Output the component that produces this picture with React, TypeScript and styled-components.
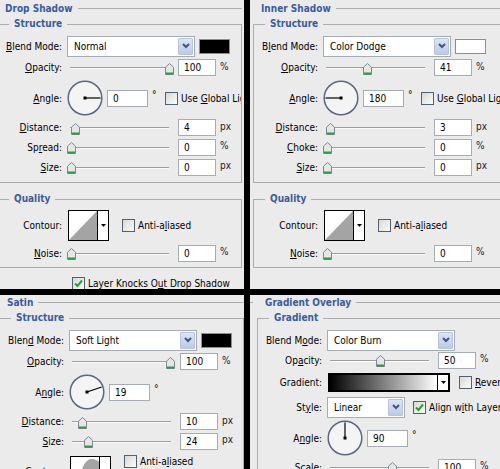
import React from 'react';
import styled, { createGlobalStyle } from 'styled-components';

const LINE = '#adadad';
const BLUE = '#3a5c9f';
const FIELD_BORDER = '#a5acb5';

const GlobalStyle = createGlobalStyle`
  html, body { margin: 0; padding: 0; background: #000; }
  body {
    font-family: 'DejaVu Sans Condensed', 'Liberation Sans', Arial, sans-serif;
    font-size: 10px;
    color: #000;
  }
  #root { width: 500px; height: 469px; overflow: hidden; }
`;

const Screen = styled.div`
  display: grid;
  grid-template-columns: 244px 250px;
  grid-template-rows: 289px 174px;
  gap: 6px;
  width: 500px;
  height: 469px;
  background: #000;
`;

const Panel = styled.section`
  background: #ebebeb;
  overflow: hidden;
`;

const Sheet = styled.div<{ $shift: number; $top: number; $w: number }>`
  margin: ${p => p.$top}px 0 0 ${p => p.$shift}px;
  width: ${p => p.$w}px;
`;

const TitleRow = styled.div`
  display: flex;
  align-items: center;
  height: 16px;
  margin-left: -14px;
  color: ${BLUE};
  font-weight: bold;
  white-space: nowrap;

  &::before {
    content: '';
    width: 10px;
    height: 1px;
    background: ${LINE};
    margin-right: 12px;
  }

  &::after {
    content: '';
    flex: 1;
    height: 1px;
    background: ${LINE};
    margin-left: 5px;
  }
`;

const Group = styled.fieldset<{ $mt: number; $pt: number; $pb: number }>`
  margin: ${p => p.$mt}px 0 0;
  padding: ${p => p.$pt}px 0 ${p => p.$pb}px;
  border: 1px solid ${LINE};
  min-width: 0;
  overflow: hidden;
`;

const Legend = styled.legend`
  margin-left: 11px;
  padding: 0 5px;
  color: ${BLUE};
  font-weight: bold;
  line-height: 14px;
`;

const Row = styled.div<{ $h: number }>`
  display: flex;
  align-items: center;
  height: ${p => p.$h}px;
  white-space: nowrap;
`;

const Label = styled.span`
  flex: none;
  width: 64px;
  text-align: right;
`;

const Controls = styled.div`
  display: flex;
  align-items: center;
  margin-left: 5px;
  height: 100%;
`;

const SelectBox = styled.div<{ $w: number }>`
  flex: none;
  display: flex;
  align-items: stretch;
  width: ${p => p.$w}px;
  height: 21px;
  box-sizing: border-box;
  padding: 1px;
  border: 1px solid ${FIELD_BORDER};
  background: #fff;
`;

const SelectText = styled.span`
  flex: 1;
  display: flex;
  align-items: center;
  padding-left: 5px;
`;

const DropButton = styled.span`
  width: 15px;
  box-sizing: border-box;
  border: 1px solid #b7c4de;
  border-radius: 1px;
  background: linear-gradient(#dbe4f5, #bccbea);
  display: flex;
  align-items: center;
  justify-content: center;
`;

const Swatch = styled.div<{ $color: string }>`
  flex: none;
  width: 31px;
  height: 15px;
  margin-left: 4px;
  box-sizing: border-box;
  border: 1px solid #8e8e8e;
  background: ${p => p.$color};
`;

const SliderWrap = styled.div`
  position: relative;
  flex: none;
  display: flex;
  align-items: center;
  width: 106px;
  height: 14px;
  box-sizing: border-box;
  padding: 0 4px 0 3px;
`;

const Track = styled.div`
  flex: 1;
  height: 1px;
  background: #9e9e9e;
  box-shadow: 0 1px 0 #fbfbfb;
`;

const ThumbSvg = styled.svg`
  position: absolute;
  top: 2px;
`;

const NumField = styled.div<{ $w?: number; $ml?: number }>`
  flex: none;
  display: flex;
  align-items: center;
  width: ${p => p.$w ?? 38}px;
  height: 17px;
  margin-left: ${p => p.$ml ?? 5}px;
  box-sizing: border-box;
  padding-left: 5px;
  border: 1px solid ${FIELD_BORDER};
  background: #fff;
`;

const Unit = styled.span`
  margin: 0 0 3px 4px;
  color: #222;
`;

const Degree = styled.span`
  flex: none;
  width: 13px;
  padding-left: 4px;
  margin-bottom: 7px;
`;

const CheckBox = styled.span<{ $ml?: number }>`
  flex: none;
  display: flex;
  align-items: center;
  justify-content: center;
  width: 13px;
  height: 13px;
  margin-left: ${p => p.$ml ?? 0}px;
  box-sizing: border-box;
  border: 1px solid #4f5f75;
  background: linear-gradient(135deg, #d8d9d2, #fbfbfa);
`;

const CheckText = styled.span`
  margin-left: 3px;
  white-space: nowrap;
`;

const KnockRow = styled.div`
  display: flex;
  align-items: center;
  height: 14px;
  margin-top: 8px;
  padding-left: 75px;
`;

const ContourBox = styled.div`
  flex: none;
  display: flex;
  width: 41px;
  height: 31px;
  margin-left: 1px;
  box-sizing: border-box;
  border: 1px solid #000;
  background: #fff;
`;

const ContourArrow = styled.div`
  flex: 1;
  border-left: 1px solid #000;
  display: flex;
  align-items: center;
  justify-content: center;
`;

const CheckGroup = styled.div<{ $ml: number; $top?: boolean }>`
  display: flex;
  align-items: center;
  margin-left: ${p => p.$ml}px;
  align-self: ${p => (p.$top ? 'flex-start' : 'center')};
  margin-top: ${p => (p.$top ? 4 : 0)}px;
`;

const GradientBar = styled.div`
  flex: none;
  display: flex;
  width: 122px;
  height: 19px;
  margin-left: 1px;
  box-sizing: border-box;
  border: 2px solid #000;
  background: #fff;
`;

const GradientFill = styled.div`
  flex: 1;
  background: linear-gradient(to right, #000, #fff);
  border-right: 1px solid #000;
`;

const GradientArrow = styled.div`
  width: 10px;
  display: flex;
  align-items: center;
  justify-content: center;
`;

const Chevron = () => (
  <svg width="8" height="6" viewBox="0 0 8 6">
    <polyline points="1,1 4,4 7,1" fill="none" stroke="#41557a" strokeWidth="2" />
  </svg>
);

const SmallArrow = () => (
  <svg width="5" height="3" viewBox="0 0 5 3">
    <polygon points="0,0 5,0 2.5,3" fill="#000" />
  </svg>
);

const Tick = () => (
  <svg width="9" height="9" viewBox="0 0 9 9">
    <polyline points="1,4.5 3.5,7 8,1.5" fill="none" stroke="#21a131" strokeWidth="2" />
  </svg>
);

const Select = ({ w, text }: { w: number; text: string }) => (
  <SelectBox $w={w}>
    <SelectText>{text}</SelectText>
    <DropButton>
      <Chevron />
    </DropButton>
  </SelectBox>
);

const Slider = ({ frac }: { frac: number }) => (
  <SliderWrap>
    <Track />
    <ThumbSvg style={{ left: Math.round(frac * 98) }} width="9" height="12" viewBox="0 0 9 12">
      <path d="M0.5 4.2 L4.5 0.5 L8.5 4.2 V11.5 H0.5 Z" fill="#e4e7e4" stroke="#7c8891" />
      <path d="M1 10.5 H8" stroke="#2f9b47" strokeWidth="2" />
    </ThumbSvg>
  </SliderWrap>
);

const Dial = ({ angle }: { angle: number }) => {
  const rad = (angle * Math.PI) / 180;
  const x = 18 + 15.5 * Math.cos(rad);
  const y = 18 - 15.5 * Math.sin(rad);
  return (
    <svg width="36" height="36" viewBox="0 0 36 36" style={{ flex: 'none' }}>
      <circle cx="18" cy="18" r="16.8" fill="#f4f4f4" stroke="#5b6880" strokeWidth="1.5" />
      <line x1="18" y1="18" x2={x} y2={y} stroke="#000" strokeWidth="1.2" />
      <rect x="16.5" y="16.5" width="3" height="3" fill="#000" />
    </svg>
  );
};

const Check = ({ on, ml }: { on?: boolean; ml?: number }) => (
  <CheckBox $ml={ml}>{on && <Tick />}</CheckBox>
);

type FieldProps = { h: number; label: React.ReactNode; children: React.ReactNode };

const Field = ({ h, label, children }: FieldProps) => (
  <Row $h={h}>
    <Label>{label}</Label>
    <Controls>{children}</Controls>
  </Row>
);

const SliderField = ({
  h,
  label,
  frac,
  value,
  unit,
}: {
  h: number;
  label: React.ReactNode;
  frac: number;
  value: string;
  unit: string;
}) => (
  <Field h={h} label={label}>
    <Slider frac={frac} />
    <NumField>{value}</NumField>
    <Unit>{unit}</Unit>
  </Field>
);

const AngleField = ({
  h,
  label,
  angle,
  global,
}: {
  h: number;
  label: React.ReactNode;
  angle: number;
  global?: React.ReactNode;
}) => (
  <Field h={h} label={label}>
    <Dial angle={angle} />
    <NumField $w={41} $ml={4}>
      {angle}
    </NumField>
    <Degree>°</Degree>
    {global && (
      <>
        <Check />
        <CheckText>{global}</CheckText>
      </>
    )}
  </Field>
);

const LinearContour = () => (
  <svg width="28" height="29" viewBox="0 0 28 29">
    <polygon points="0,29 28,0 28,29" fill="#a4a4a4" />
  </svg>
);

const SatinContour = () => (
  <svg width="28" height="29" viewBox="0 0 28 29">
    <path d="M8 29 C9 14 13 3 20 2 C24 2 28 4 28 5 V29 Z" fill="#a4a4a4" />
  </svg>
);

const ContourField = ({ h, satin }: { h: number; satin?: boolean }) => (
  <Field h={h} label="Contour:">
    <ContourBox>
      {satin ? <SatinContour /> : <LinearContour />}
      <ContourArrow>
        <SmallArrow />
      </ContourArrow>
    </ContourBox>
    <CheckGroup $ml={13} $top={satin}>
      <Check />
      <CheckText>
        Anti-a<u>l</u>iased
      </CheckText>
    </CheckGroup>
  </Field>
);

const DropShadow = () => (
  <Panel>
    <Sheet $shift={-3} $top={0} $w={245}>
      <TitleRow>Drop Shadow</TitleRow>
      <Group $mt={1} $pt={4} $pb={5}>
        <Legend>Structure</Legend>
        <Field h={22} label={<><u>B</u>lend Mode:</>}>
          <Select w={128} text="Normal" />
          <Swatch $color="#000" />
        </Field>
        <SliderField h={21} label={<><u>O</u>pacity:</>} frac={1} value="100" unit="%" />
        <AngleField h={40} label={<><u>A</u>ngle:</>} angle={0} global={<>Use <u>G</u>lobal Light</>} />
        <SliderField h={19} label={<><u>D</u>istance:</>} frac={0.04} value="4" unit="px" />
        <SliderField h={20} label={<>Sp<u>r</u>ead:</>} frac={0} value="0" unit="%" />
        <SliderField h={20} label={<><u>S</u>ize:</>} frac={0} value="0" unit="px" />
      </Group>
      <Group $mt={9} $pt={2} $pb={4}>
        <Legend>Quality</Legend>
        <ContourField h={35} />
        <SliderField h={20} label={<><u>N</u>oise:</>} frac={0} value="0" unit="%" />
      </Group>
      <KnockRow>
        <Check on />
        <CheckText>
          Layer Knocks O<u>u</u>t Drop Shadow
        </CheckText>
      </KnockRow>
    </Sheet>
  </Panel>
);

const InnerShadow = () => (
  <Panel>
    <Sheet $shift={3} $top={0} $w={300}>
      <TitleRow>Inner Shadow</TitleRow>
      <Group $mt={1} $pt={4} $pb={5}>
        <Legend>Structure</Legend>
        <Field h={22} label={<>B<u>l</u>end Mode:</>}>
          <Select w={128} text="Color Dodge" />
          <Swatch $color="#fff" />
        </Field>
        <SliderField h={21} label={<><u>O</u>pacity:</>} frac={0.41} value="41" unit="%" />
        <AngleField h={40} label={<><u>A</u>ngle:</>} angle={180} global={<>Use <u>G</u>lobal Light</>} />
        <SliderField h={19} label={<><u>D</u>istance:</>} frac={0.03} value="3" unit="px" />
        <SliderField h={20} label={<><u>C</u>hoke:</>} frac={0} value="0" unit="%" />
        <SliderField h={20} label={<><u>S</u>ize:</>} frac={0} value="0" unit="px" />
      </Group>
      <Group $mt={9} $pt={2} $pb={4}>
        <Legend>Quality</Legend>
        <ContourField h={35} />
        <SliderField h={20} label={<><u>N</u>oise:</>} frac={0} value="0" unit="%" />
      </Group>
    </Sheet>
  </Panel>
);

const Satin = () => (
  <Panel>
    <Sheet $shift={-1} $top={-1} $w={245}>
      <TitleRow>Satin</TitleRow>
      <Group $mt={1} $pt={4} $pb={5}>
        <Legend>Structure</Legend>
        <Field h={22} label={<>Blen<u>d</u> Mode:</>}>
          <Select w={128} text="Soft Light" />
          <Swatch $color="#000" />
        </Field>
        <SliderField h={21} label={<><u>O</u>pacity:</>} frac={0.99} value="100" unit="%" />
        <AngleField h={40} label={<>A<u>n</u>gle:</>} angle={19} />
        <SliderField h={19} label={<><u>D</u>istance:</>} frac={0.087} value="10" unit="px" />
        <SliderField h={20} label={<><u>S</u>ize:</>} frac={0.153} value="24" unit="px" />
        <ContourField h={40} satin />
      </Group>
    </Sheet>
  </Panel>
);

const GradientOverlay = () => (
  <Panel>
    <Sheet $shift={7} $top={-1} $w={300}>
      <TitleRow>Gradient Overlay</TitleRow>
      <Group $mt={1} $pt={4} $pb={5}>
        <Legend>Gradient</Legend>
        <Field h={22} label={<>Blend M<u>o</u>de:</>}>
          <Select w={128} text="Color Burn" />
        </Field>
        <SliderField h={18} label={<>Op<u>a</u>city:</>} frac={0.505} value="50" unit="%" />
        <Field h={26} label="Gradient:">
          <GradientBar>
            <GradientFill />
            <GradientArrow>
              <SmallArrow />
            </GradientArrow>
          </GradientBar>
          <Check ml={9} />
          <CheckText>
            <u>R</u>everse
          </CheckText>
        </Field>
        <Field h={24} label={<>St<u>y</u>le:</>}>
          <Select w={78} text="Linear" />
          <Check on ml={8} />
          <CheckText>
            Align w<u>i</u>th Layer
          </CheckText>
        </Field>
        <AngleField h={38} label={<>A<u>n</u>gle:</>} angle={90} />
        <SliderField h={20} label="Scale:" frac={0.62} value="100" unit="%" />
      </Group>
    </Sheet>
  </Panel>
);

export default function App() {
  return (
    <>
      <GlobalStyle />
      <Screen>
        <DropShadow />
        <InnerShadow />
        <Satin />
        <GradientOverlay />
      </Screen>
    </>
  );
}
